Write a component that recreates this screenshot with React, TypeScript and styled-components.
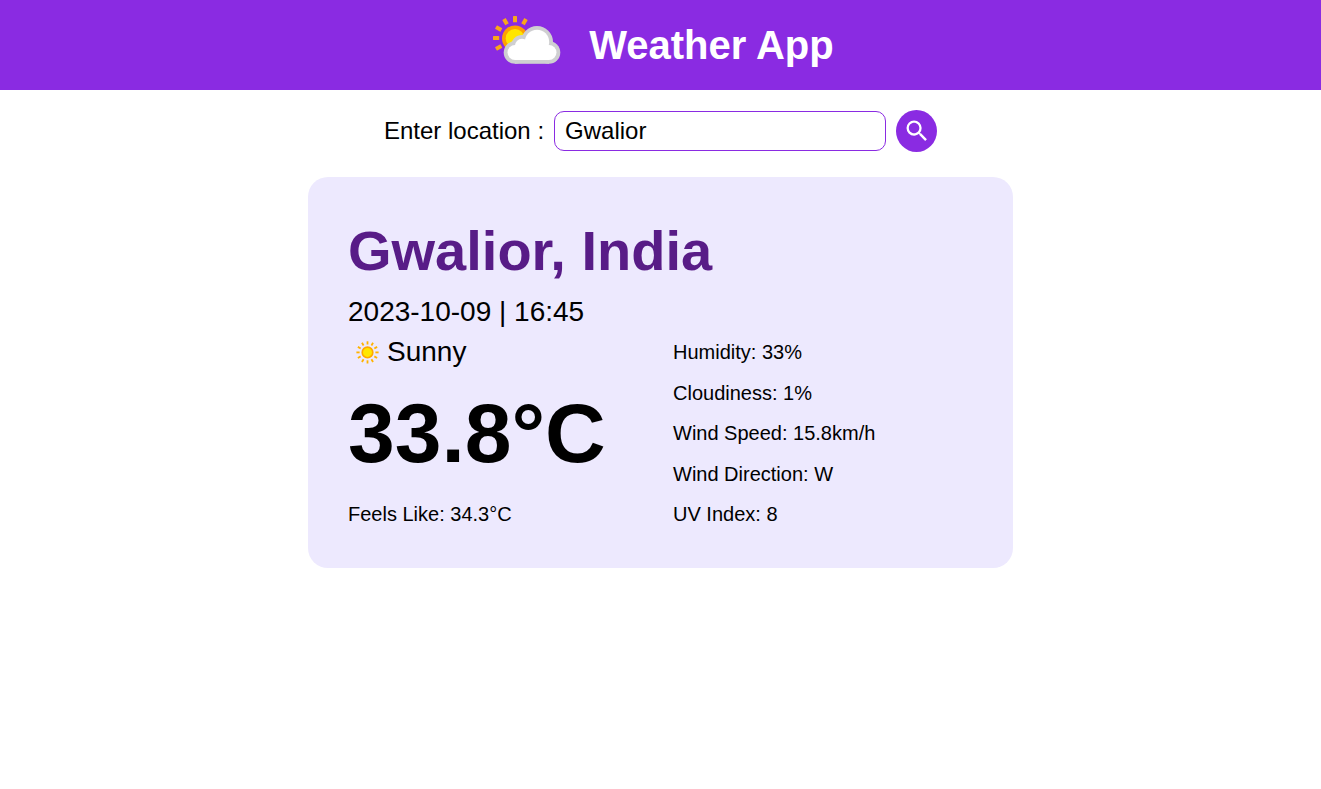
import React, { useState } from "react";
import styled, { createGlobalStyle } from "styled-components";
import { MdSearch } from "react-icons/md";

const GlobalStyle = createGlobalStyle`
  *, *::before, *::after { box-sizing: border-box; }
  body {
    margin: 0;
    background: #ffffff;
    color: #000000;
    font-family: "Liberation Sans", Arial, sans-serif;
  }
  h1, h2, p, ul { margin: 0; padding: 0; }
`;

const Header = styled.header`
  display: flex;
  align-items: center;
  justify-content: center;
  gap: 12px;
  height: 90px;
  background: #8a2be2;
  color: #ffffff;
`;

const Title = styled.h1`
  font-size: 40px;
  line-height: 46px;
`;

const Logo = styled.svg`
  width: 90px;
  height: 90px;
  flex: none;
`;

const SearchForm = styled.form`
  display: flex;
  align-items: center;
  justify-content: center;
  gap: 10px;
  padding: 20px 16px 25px;
`;

const Label = styled.label`
  font-size: 24px;
  line-height: 28px;
`;

const LocationInput = styled.input`
  flex: 0 1 332px;
  min-width: 0;
  height: 40px;
  padding: 0 10px;
  border: 1px solid #8a2be2;
  border-radius: 10px;
  outline: none;
  background: #ffffff;
  color: #000000;
  font-family: inherit;
  font-size: 24px;
`;

const SearchButton = styled.button`
  display: flex;
  align-items: center;
  justify-content: center;
  flex: none;
  width: 41px;
  height: 42px;
  padding: 0;
  border: 0;
  border-radius: 50%;
  background: #8a2be2;
  color: #ffffff;
  cursor: pointer;
`;

const Card = styled.main`
  max-width: 705px;
  margin: 0 auto;
  padding: 40px;
  border-radius: 20px;
  background: #ede9fe;
`;

const Place = styled.h2`
  color: #581c87;
  font-size: 56px;
  line-height: 68px;
`;

const DateTime = styled.p`
  margin-top: 11px;
  font-size: 28px;
  line-height: 32px;
`;

const Columns = styled.div`
  display: grid;
  grid-template-columns: 1fr 1fr;
  column-gap: 25px;
  margin-top: 8px;
`;

const Current = styled.section`
  display: flex;
  flex-direction: column;
  justify-content: space-between;
  padding-bottom: 2px;
`;

const Condition = styled.p`
  display: flex;
  align-items: center;
  font-size: 28px;
  line-height: 32px;
`;

const Temperature = styled.p`
  padding-bottom: 4px;
  font-size: 84px;
  font-weight: bold;
  line-height: 96px;
`;

const Detail = styled.p`
  font-size: 20px;
  line-height: 24px;
`;

const Details = styled.section`
  display: flex;
  flex-direction: column;
  justify-content: space-between;
  height: 192px;
  padding: 4px 0 2px;
`;

const logoRays = [150, 180, 210, 240, 270, 300];
const sunRays = Array.from({ length: 12 }, (_, i) => i * 30);
const cloudLobes = [
  { x: 35, y: 47.5, r: 11.3 },
  { x: 42, y: 41, r: 11 },
  { x: 57, y: 37, r: 16 },
  { x: 69, y: 47.5, r: 11.3 },
];

function CloudShape({ inset, fill }: { inset: number; fill: string }) {
  return (
    <g fill={fill}>
      {cloudLobes.map((c) => (
        <circle key={c.x} cx={c.x} cy={c.y} r={c.r - inset} />
      ))}
      <rect x={35} y={43} width={34} height={15.8 - inset} />
    </g>
  );
}

function PartlyCloudy() {
  return (
    <Logo viewBox="7 -5 90 90" aria-hidden="true">
      {logoRays.map((a) => (
        <rect key={a} x={50.8} y={31} width={6.2} height={4} rx={0.5} fill="#f9a61a" transform={`rotate(${a} 35 33)`} />
      ))}
      <circle cx={35} cy={33.4} r={13} fill="#ffa000" />
      <circle cx={35} cy={33.4} r={9.3} fill="#ffe600" />
      <CloudShape inset={0} fill="#cfcfd1" />
      <CloudShape inset={3.8} fill="#ffffff" />
    </Logo>
  );
}

function Sun() {
  return (
    <svg width="39" height="32" viewBox="0 0 39 32" aria-hidden="true">
      {sunRays.map((a) => (
        <rect key={a} x={27.4} y={15.5} width={3.2} height={1.8} fill="#ffb300" transform={`rotate(${a} 19.5 16.4)`} />
      ))}
      <circle cx={19.5} cy={16.4} r={5.3} fill="#ffe600" stroke="#ffa800" strokeWidth={1.6} />
    </svg>
  );
}

const details = [
  ["Humidity", "33%"],
  ["Cloudiness", "1%"],
  ["Wind Speed", "15.8km/h"],
  ["Wind Direction", "W"],
  ["UV Index", "8"],
];

export default function App() {
  const [location, setLocation] = useState("Gwalior");
  return (
    <>
      <GlobalStyle />
      <Header>
        <PartlyCloudy />
        <Title>Weather App</Title>
      </Header>
      <SearchForm onSubmit={(e: React.FormEvent) => e.preventDefault()}>
        <Label htmlFor="location">Enter location :</Label>
        <LocationInput
          id="location"
          type="text"
          value={location}
          onChange={(e: React.ChangeEvent<HTMLInputElement>) => setLocation(e.target.value)}
        />
        <SearchButton type="submit" aria-label="Search">
          <MdSearch size={28} />
        </SearchButton>
      </SearchForm>
      <Card>
        <Place>Gwalior, India</Place>
        <DateTime>2023-10-09 | 16:45</DateTime>
        <Columns>
          <Current>
            <Condition>
              <Sun />
              Sunny
            </Condition>
            <Temperature>33.8°C</Temperature>
            <Detail>Feels Like: 34.3°C</Detail>
          </Current>
          <Details>
            {details.map(([name, value]) => (
              <Detail key={name}>{`${name}: ${value}`}</Detail>
            ))}
          </Details>
        </Columns>
      </Card>
    </>
  );
}
